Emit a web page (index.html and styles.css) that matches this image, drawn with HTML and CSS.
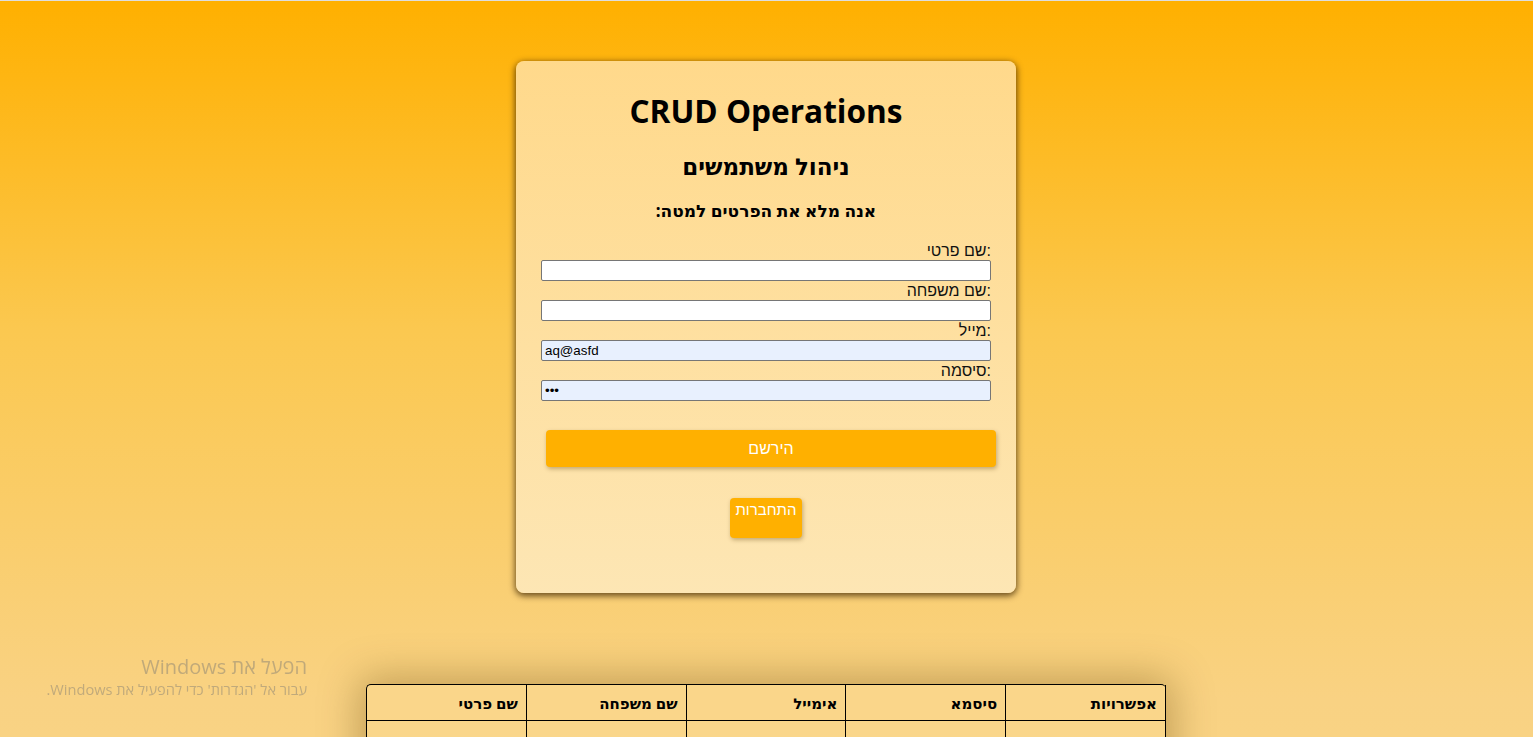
FILE: index.html
```html
<!DOCTYPE html>
<html lang="he">
<head>
<meta charset="utf-8">
<title>CRUD Operations</title>
<link rel="stylesheet" href="styles.css">
</head>
<body>
<div class="page">
  <div class="card">
    <h1 class="title">CRUD Operations</h1>
    <h2 class="subtitle" dir="rtl">ניהול משתמשים</h2>
    <h3 class="hint" dir="rtl">אנה מלא את הפרטים למטה:</h3>
    <form class="form">
      <label class="label">שם פרטי:</label>
      <input class="field" type="text">
      <label class="label">שם משפחה:</label>
      <input class="field" type="text">
      <label class="label">מייל:</label>
      <input class="field filled" type="text" value="aq@asfd">
      <label class="label">סיסמה:</label>
      <input class="field filled" type="password" value="abc">
    </form>
    <button class="btn-register" type="button">הירשם</button>
    <button class="btn-login" type="button">התחברות</button>
  </div>

  <table class="users">
    <thead>
      <tr>
        <th>שם פרטי</th>
        <th>שם משפחה</th>
        <th>אימייל</th>
        <th>סיסמא</th>
        <th>אפשרויות</th>
      </tr>
    </thead>
    <tbody>
      <tr>
        <td></td>
        <td></td>
        <td></td>
        <td></td>
        <td class="actions"><span class="mini-btn small"></span><span class="mini-btn"></span></td>
      </tr>
    </tbody>
  </table>
</div>
<div class="watermark" dir="rtl">
  <div class="wm-title">הפעל את Windows</div>
  <div class="wm-sub">עבור אל 'הגדרות' כדי להפעיל את Windows.</div>
</div>
</body>
</html>
```
FILE: styles.css
```css
html {
  margin: 0;
  border-top: 1px solid #dedede;
  background: linear-gradient(to bottom, #ffb000 0px, #fbc850 330px, #f9d283 700px, #f9d586 900px);
  min-height: 100%;
}
body {
  margin: 0;
  font-family: "Liberation Sans", "DejaVu Sans", Arial, sans-serif;
  color: #000;
}
.page {
  display: flex;
  flex-direction: column;
  align-items: center;
  padding-top: 60px;
  padding-bottom: 60px;
  padding-right: 1px;
}
.card {
  box-sizing: border-box;
  width: 500px;
  padding: 31px 0 55px;
  border-radius: 8px;
  background: linear-gradient(to bottom, #ffd98b 0%, #fde6b4 100%);
  box-shadow: 0 2px 6px 1px rgba(60, 35, 0, 0.75);
  display: flex;
  flex-direction: column;
  align-items: stretch;
}
.title {
  margin: 0;
  text-align: center;
  font-family: "Open Sans", "Noto Sans", sans-serif;
  font-weight: 700;
  font-size: 31.6px;
  line-height: 38px;
  letter-spacing: 0;
}
.subtitle {
  margin: 21px 0 0;
  text-align: center;
  font-family: "Noto Sans", "DejaVu Sans", sans-serif;
  font-weight: 700;
  font-size: 23px;
  line-height: 30px;
}
.hint {
  margin: 19px 0 0;
  text-align: center;
  font-family: "Noto Sans", "DejaVu Sans", sans-serif;
  font-weight: 700;
  font-size: 17px;
  line-height: 22px;
}
.form {
  margin: 19px 25px 0;
  display: flex;
  flex-direction: column;
}
.label {
  display: block;
  text-align: right;
  font-size: 16px;
  line-height: 19px;
  height: 19px;
  color: #111;
}
.field {
  box-sizing: border-box;
  width: 450px;
  height: 21px;
  margin: 0;
  padding: 1px 3px;
  border: 1px solid #767676;
  border-radius: 2px;
  background: #fff;
  font-family: "Liberation Sans", Arial, sans-serif;
  font-size: 13.33px;
  color: #000;
}
.field.filled {
  background: #e8f0fe;
}
.btn-register {
  box-sizing: border-box;
  width: 450px;
  height: 37px;
  margin: 29px 0 0 30px;
  border: none;
  border-radius: 4px;
  background: #ffb000;
  color: #fff;
  font-family: "Liberation Sans", "DejaVu Sans", Arial, sans-serif;
  font-size: 16px;
  box-shadow: 1px 2px 4px rgba(90, 60, 0, 0.35);
}
.btn-login {
  box-sizing: border-box;
  align-self: center;
  width: 72px;
  height: 40px;
  margin: 31px 0 0;
  padding: 3px 0 0;
  border: none;
  border-radius: 4px;
  background: #ffb000;
  color: #fff;
  font-family: "Liberation Sans", "DejaVu Sans", Arial, sans-serif;
  font-size: 15px;
  line-height: 18px;
  display: flex;
  justify-content: center;
  align-items: flex-start;
  box-shadow: 1px 2px 4px rgba(90, 60, 0, 0.35);
}
.users {
  margin-top: 91px;
  width: 800px;
  border-collapse: separate;
  border-spacing: 0;
  border-top: 1px solid #000;
  border-left: 1px solid #000;
  border-radius: 5px 5px 0 0;
  background: #fad68a;
  box-shadow: 0 0 40px 6px rgba(90, 60, 0, 0.35);
  table-layout: fixed;
}
.users th,
.users td {
  border-right: 1px solid #000;
  border-bottom: 1px solid #000;
  text-align: right;
  padding: 0 8px;
}
.users th {
  height: 35px;
  font-family: "Noto Sans", "DejaVu Sans", sans-serif;
  font-size: 15px;
  font-weight: 700;
}
.users td {
  height: 60px;
  vertical-align: top;
}
.actions {
  padding-top: 12px !important;
}
.mini-btn {
  display: inline-block;
  width: 50px;
  height: 30px;
  margin-top: 12px;
  margin-left: 13px;
  border-radius: 5px;
  background: #ffb000;
  box-shadow: 1px 2px 4px rgba(90, 60, 0, 0.35);
}
.mini-btn.small {
  width: 40px;
  margin-left: 0;
}
.watermark {
  position: fixed;
  left: 0;
  top: 654px;
  width: 307px;
  text-align: right;
  font-family: "Open Sans", "Noto Sans", sans-serif;
  color: rgba(115, 115, 115, 0.42);
}
.wm-title {
  font-size: 20px;
  line-height: 25px;
}
.wm-sub {
  font-size: 14.6px;
  line-height: 20px;
}
```
